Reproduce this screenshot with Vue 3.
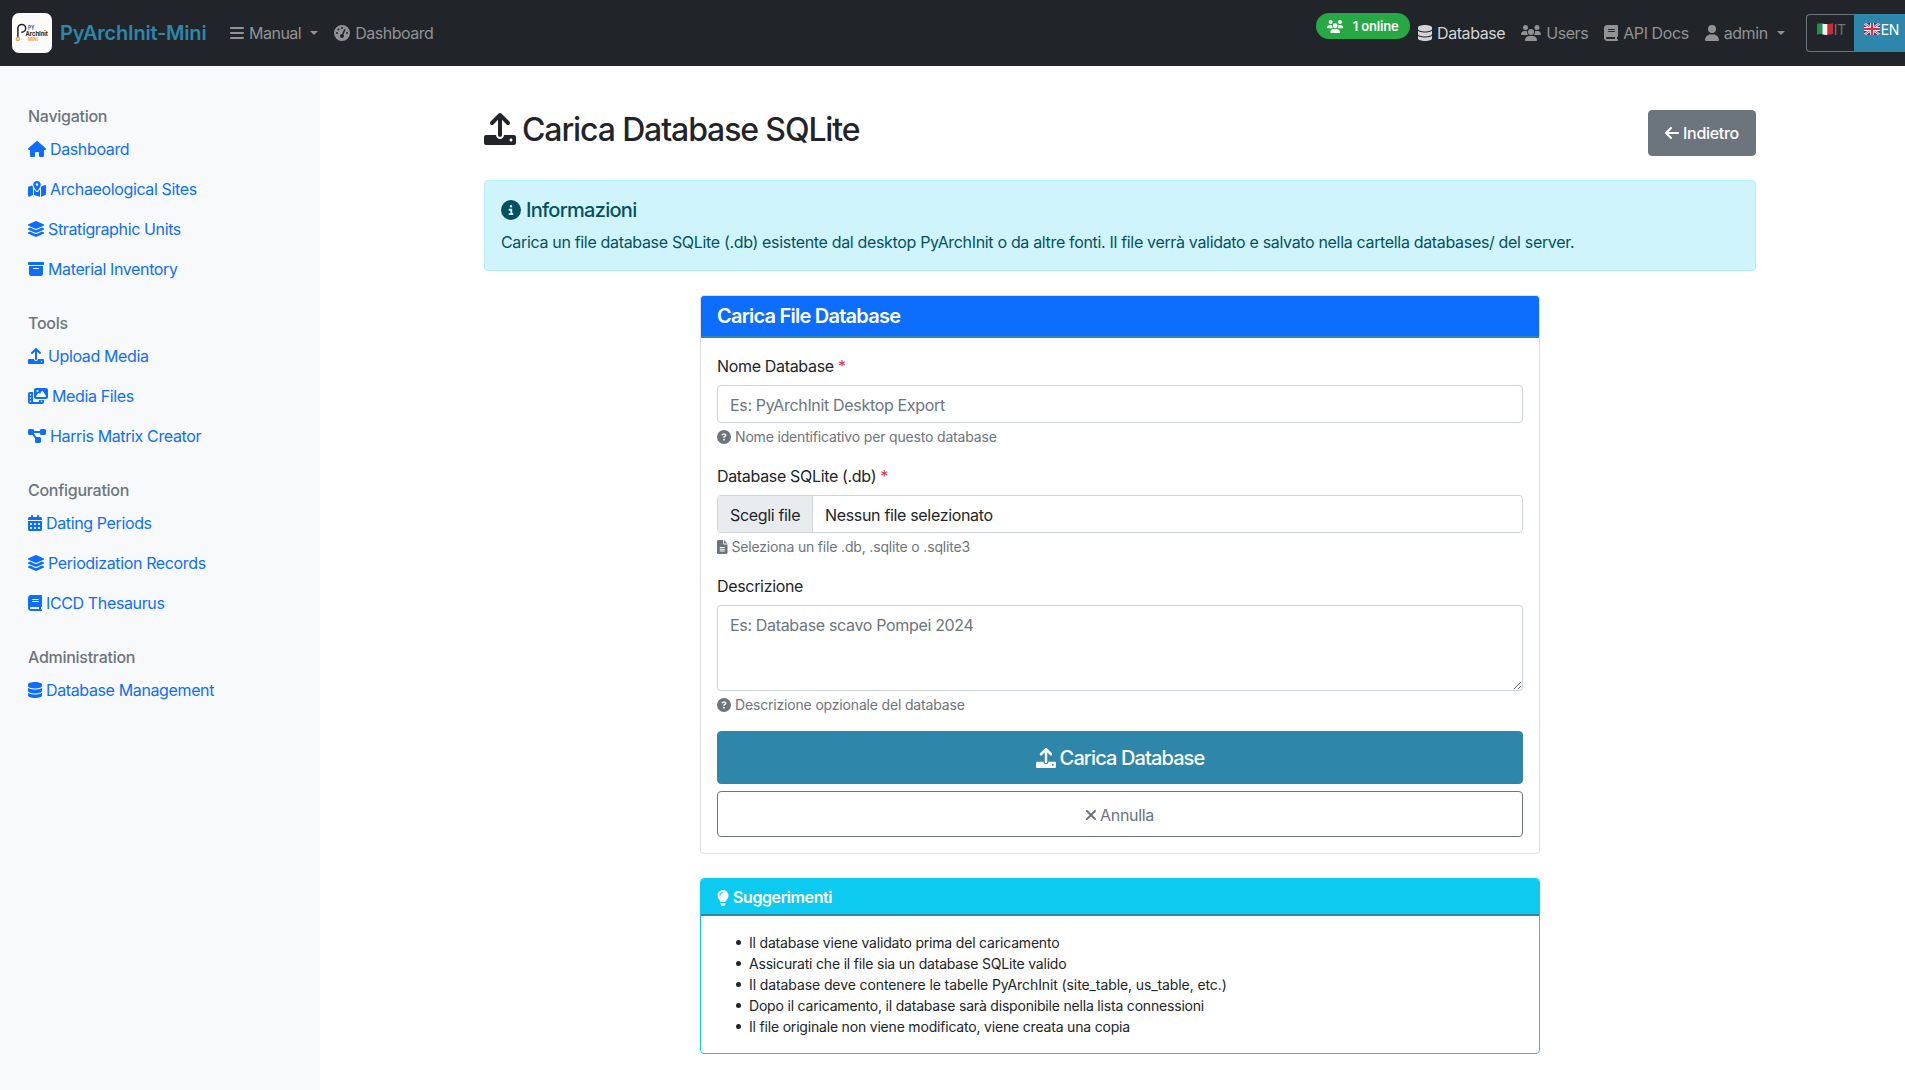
<script setup>
import { h } from 'vue'

const icons = {
  bars: [448, 'M0 96C0 78.3 14.3 64 32 64l384 0c17.7 0 32 14.3 32 32s-14.3 32-32 32L32 128C14.3 128 0 113.7 0 96zM0 256c0-17.7 14.3-32 32-32l384 0c17.7 0 32 14.3 32 32s-14.3 32-32 32L32 288c-17.7 0-32-14.3-32-32zM448 416c0 17.7-14.3 32-32 32L32 448c-17.7 0-32-14.3-32-32s14.3-32 32-32l384 0c17.7 0 32 14.3 32 32z'],
  gauge: [512, 'M0 256a256 256 0 1 1 512 0A256 256 0 1 1 0 256zM288 96a32 32 0 1 0 -64 0 32 32 0 1 0 64 0zM256 416c35.3 0 64-28.7 64-64c0-17.4-6.9-33.1-18.1-44.6L366 161.7c5.3-12.1-.2-26.3-12.3-31.6s-26.3 .2-31.6 12.3L257.9 288c-.6 0-1.3 0-1.9 0c-35.3 0-64 28.7-64 64s28.7 64 64 64zM176 144a32 32 0 1 0 -64 0 32 32 0 1 0 64 0zM96 288a32 32 0 1 0 0-64 32 32 0 1 0 0 64zm352-32a32 32 0 1 0 -64 0 32 32 0 1 0 64 0z'],
  users: [640, 'M144 0a80 80 0 1 1 0 160A80 80 0 1 1 144 0zM512 0a80 80 0 1 1 0 160A80 80 0 1 1 512 0zM0 298.7C0 239.8 47.8 192 106.7 192l42.7 0c15.9 0 31 3.5 44.6 9.7c-1.3 7.2-1.9 14.7-1.9 22.3c0 38.2 16.8 72.5 43.3 96c-.2 0-.4 0-.7 0L21.3 320C9.6 320 0 310.4 0 298.7zM405.3 320c-.2 0-.4 0-.7 0c26.6-23.5 43.3-57.8 43.3-96c0-7.6-.7-15-1.9-22.3c13.6-6.3 28.7-9.7 44.6-9.7l42.7 0C592.2 192 640 239.8 640 298.7c0 11.8-9.6 21.3-21.3 21.3l-213.3 0zM224 224a96 96 0 1 1 192 0 96 96 0 1 1 -192 0zM128 485.3C128 411.7 187.7 352 261.3 352l117.3 0C452.3 352 512 411.7 512 485.3c0 14.7-11.9 26.7-26.7 26.7l-330.7 0c-14.7 0-26.7-11.9-26.7-26.7z'],
  database: [448, 'M448 80l0 48c0 44.2-100.3 80-224 80S0 172.2 0 128L0 80C0 35.8 100.3 0 224 0S448 35.8 448 80zM393.2 214.7c20.8-7.4 39.9-16.9 54.8-28.6L448 288c0 44.2-100.3 80-224 80S0 332.2 0 288L0 186.1c14.9 11.8 34 21.2 54.8 28.6C99.7 230.7 159.5 240 224 240s124.3-9.3 169.2-25.3zM0 346.1c14.9 11.8 34 21.2 54.8 28.6C99.7 390.7 159.5 400 224 400s124.3-9.3 169.2-25.3c20.8-7.4 39.9-16.9 54.8-28.6l0 85.9c0 44.2-100.3 80-224 80S0 476.2 0 432l0-85.9z'],
  book: [448, 'M96 0C43 0 0 43 0 96L0 416c0 53 43 96 96 96l288 0 32 0c17.7 0 32-14.3 32-32s-14.3-32-32-32l0-64c17.7 0 32-14.3 32-32l0-320c0-17.7-14.3-32-32-32L384 0 96 0zm0 384l256 0 0 64L96 448c-17.7 0-32-14.3-32-32s14.3-32 32-32zm32-240c0-8.8 7.2-16 16-16l192 0c8.8 0 16 7.2 16 16s-7.2 16-16 16l-192 0c-8.8 0-16-7.2-16-16zm16 48l192 0c8.8 0 16 7.2 16 16s-7.2 16-16 16l-192 0c-8.8 0-16-7.2-16-16s7.2-16 16-16z'],
  user: [448, 'M224 256A128 128 0 1 0 224 0a128 128 0 1 0 0 256zm-45.7 48C79.8 304 0 383.8 0 482.3C0 498.7 13.3 512 29.7 512l388.6 0c16.4 0 29.7-13.3 29.7-29.7C448 383.8 368.2 304 269.7 304l-91.4 0z'],
  home: [576, 'M575.8 255.5c0 18-15 32.1-32 32.1l-32 0 .7 160.2c0 2.7-.2 5.4-.5 8.1l0 16.2c0 22.1-17.9 40-40 40l-16 0c-1.1 0-2.2 0-3.3-.1c-1.4 .1-2.8 .1-4.2 .1L416 512l-24 0c-22.1 0-40-17.9-40-40l0-24 0-64c0-17.7-14.3-32-32-32l-64 0c-17.7 0-32 14.3-32 32l0 64 0 24c0 22.1-17.9 40-40 40l-24 0-31.9 0c-1.5 0-3-.1-4.5-.2c-1.2 .1-2.4 .2-3.6 .2l-16 0c-22.1 0-40-17.9-40-40l0-112c0-.9 0-1.9 .1-2.8l0-69.7-32 0c-18 0-32-14-32-32.1c0-9 3-17 10-24L266.4 8c7-7 15-8 22-8s15 2 21 7L564.8 231.5c8 7 12 15 11 24z'],
  map: [576, 'M408 120c0 54.6-73.1 151.9-105.2 192c-7.7 9.6-22 9.6-29.6 0C241.1 271.9 168 174.6 168 120C168 53.7 221.7 0 288 0s120 53.7 120 120zm8 80.4c3.5-6.9 6.7-13.8 9.6-20.6c.5-1.2 1-2.5 1.5-3.7l116-46.4C558.9 123.4 576 135 576 152l0 270.8c0 9.8-6 18.6-15.1 22.3L416 503l0-302.6zM137.6 138.3c2.4 14.1 7.2 28.3 12.8 41.5c2.9 6.8 6.1 13.7 9.6 20.6l0 251.4L32.9 502.7C17.1 509 0 497.4 0 480.4L0 209.6c0-9.8 6-18.6 15.1-22.3l122.6-49zM327.8 332c13.9-17.4 35.7-45.7 56.2-77l0 249.3L192 449.4 192 255c20.5 31.3 42.3 59.6 56.2 77c20.5 25.6 59.1 25.6 79.6 0zM288 152a40 40 0 1 0 0-80 40 40 0 1 0 0 80z'],
  layers: [512, 'M232.5 5.171C247.4-1.718 264.6-1.718 279.5 5.171L498.1 106.2C506.6 110.1 512 118.6 512 127.1C512 137.3 506.6 145.8 498.1 149.8L279.5 250.8C264.6 257.7 247.4 257.7 232.5 250.8L13.93 149.8C5.438 145.8 0 137.3 0 127.1C0 118.6 5.437 110.1 13.93 106.2L232.5 5.171zM498.1 234.2C506.6 238.1 512 246.6 512 255.1C512 265.3 506.6 273.8 498.1 277.8L279.5 378.8C264.6 385.7 247.4 385.7 232.5 378.8L13.93 277.8C5.438 273.8 0 265.3 0 255.1C0 246.6 5.437 238.1 13.93 234.2L67.13 209.6L219.1 279.8C242.5 290.7 269.5 290.7 292.9 279.8L444.9 209.6L498.1 234.2zM292.9 407.8L444.9 337.6L498.1 362.2C506.6 366.1 512 374.6 512 383.1C512 393.3 506.6 401.8 498.1 405.8L279.5 506.8C264.6 513.7 247.4 513.7 232.5 506.8L13.93 405.8C5.438 401.8 0 393.3 0 383.1C0 374.6 5.437 366.1 13.93 362.2L67.13 337.6L219.1 407.8C242.5 418.7 269.5 418.7 292.9 407.8V407.8z'],
  archive: [512, 'M32 32l448 0c17.7 0 32 14.3 32 32l0 32c0 17.7-14.3 32-32 32L32 128C14.3 128 0 113.7 0 96L0 64C0 46.3 14.3 32 32 32zm0 128l448 0 0 256c0 35.3-28.7 64-64 64L96 480c-35.3 0-64-28.7-64-64l0-256zm128 80c0 8.8 7.2 16 16 16l160 0c8.8 0 16-7.2 16-16s-7.2-16-16-16l-160 0c-8.8 0-16 7.2-16 16z'],
  upload: [512, 'M105.4 182.6c12.5 12.49 32.76 12.5 45.25 .001L224 109.3V352c0 17.67 14.33 32 32 32c17.67 0 32-14.33 32-32V109.3l73.38 73.38c12.49 12.49 32.75 12.49 45.25-.001c12.49-12.49 12.49-32.75 0-45.25l-128-128C272.4 3.125 264.2 0 256 0S239.6 3.125 233.4 9.375L105.4 137.4C92.88 149.9 92.88 170.1 105.4 182.6zM480 352h-160c0 35.35-28.65 64-64 64s-64-28.65-64-64H32c-17.67 0-32 14.33-32 32v96c0 17.67 14.33 32 32 32h448c17.67 0 32-14.33 32-32v-96C512 366.3 497.7 352 480 352zM432 456c-13.2 0-24-10.8-24-24c0-13.2 10.8-24 24-24s24 10.8 24 24C456 445.2 445.2 456 432 456z'],
  photo: [640, 'M256 0L576 0c35.3 0 64 28.7 64 64l0 224c0 35.3-28.7 64-64 64l-320 0c-35.3 0-64-28.7-64-64l0-224c0-35.3 28.7-64 64-64zM476 106.7C471.5 100 464 96 456 96s-15.5 4-20 10.7l-56 84L362.7 169c-4.6-5.7-11.5-9-18.7-9s-14.2 3.3-18.7 9l-64 80c-5.8 7.2-6.9 17.1-2.9 25.4s12.4 13.6 21.6 13.6l80 0 48 0 144 0c8.9 0 17-4.9 21.2-12.7s3.7-17.3-1.2-24.6l-96-144zM336 96a32 32 0 1 0 -64 0 32 32 0 1 0 64 0zM64 128l96 0 0 256 0 32c0 17.7 14.3 32 32 32l128 0c17.7 0 32-14.3 32-32l0-32 160 0 0 64c0 35.3-28.7 64-64 64L64 512c-35.3 0-64-28.7-64-64L0 192c0-35.3 28.7-64 64-64zm8 64c-8.8 0-16 7.2-16 16l0 16c0 8.8 7.2 16 16 16l16 0c8.8 0 16-7.2 16-16l0-16c0-8.8-7.2-16-16-16l-16 0zm0 104c-8.8 0-16 7.2-16 16l0 16c0 8.8 7.2 16 16 16l16 0c8.8 0 16-7.2 16-16l0-16c0-8.8-7.2-16-16-16l-16 0zm0 104c-8.8 0-16 7.2-16 16l0 16c0 8.8 7.2 16 16 16l16 0c8.8 0 16-7.2 16-16l0-16c0-8.8-7.2-16-16-16l-16 0zm336 16l0 16c0 8.8 7.2 16 16 16l16 0c8.8 0 16-7.2 16-16l0-16c0-8.8-7.2-16-16-16l-16 0c-8.8 0-16 7.2-16 16z'],
  diagram: [576, 'M0 80C0 53.5 21.5 32 48 32l96 0c26.5 0 48 21.5 48 48l0 16 192 0 0-16c0-26.5 21.5-48 48-48l96 0c26.5 0 48 21.5 48 48l0 96c0 26.5-21.5 48-48 48l-96 0c-26.5 0-48-21.5-48-48l0-16-192 0 0 16c0 1.7-.1 3.4-.3 5L272 288l96 0c26.5 0 48 21.5 48 48l0 96c0 26.5-21.5 48-48 48l-96 0c-26.5 0-48-21.5-48-48l0-96c0-1.7 .1-3.4 .3-5L144 224l-96 0c-26.5 0-48-21.5-48-48L0 80z'],
  calendar: [448, 'M128 0c17.7 0 32 14.3 32 32l0 32 128 0 0-32c0-17.7 14.3-32 32-32s32 14.3 32 32l0 32 48 0c26.5 0 48 21.5 48 48l0 48L0 160l0-48C0 85.5 21.5 64 48 64l48 0 0-32c0-17.7 14.3-32 32-32zM0 192l448 0 0 272c0 26.5-21.5 48-48 48L48 512c-26.5 0-48-21.5-48-48L0 192zm64 80l0 32c0 8.8 7.2 16 16 16l32 0c8.8 0 16-7.2 16-16l0-32c0-8.8-7.2-16-16-16l-32 0c-8.8 0-16 7.2-16 16zm128 0l0 32c0 8.8 7.2 16 16 16l32 0c8.8 0 16-7.2 16-16l0-32c0-8.8-7.2-16-16-16l-32 0c-8.8 0-16 7.2-16 16zm144-16c-8.8 0-16 7.2-16 16l0 32c0 8.8 7.2 16 16 16l32 0c8.8 0 16-7.2 16-16l0-32c0-8.8-7.2-16-16-16l-32 0zM64 400l0 32c0 8.8 7.2 16 16 16l32 0c8.8 0 16-7.2 16-16l0-32c0-8.8-7.2-16-16-16l-32 0c-8.8 0-16 7.2-16 16zm144-16c-8.8 0-16 7.2-16 16l0 32c0 8.8 7.2 16 16 16l32 0c8.8 0 16-7.2 16-16l0-32c0-8.8-7.2-16-16-16l-32 0zm112 16l0 32c0 8.8 7.2 16 16 16l32 0c8.8 0 16-7.2 16-16l0-32c0-8.8-7.2-16-16-16l-32 0c-8.8 0-16 7.2-16 16z'],
  info: [512, 'M256 512A256 256 0 1 0 256 0a256 256 0 1 0 0 512zM216 336l24 0 0-64-24 0c-13.3 0-24-10.7-24-24s10.7-24 24-24l48 0c13.3 0 24 10.7 24 24l0 88 8 0c13.3 0 24 10.7 24 24s-10.7 24-24 24l-80 0c-13.3 0-24-10.7-24-24s10.7-24 24-24zm40-208a32 32 0 1 1 0 64 32 32 0 1 1 0-64z'],
  question: [512, 'M256 512A256 256 0 1 0 256 0a256 256 0 1 0 0 512zM169.8 165.3c7.9-22.3 29.1-37.3 52.8-37.3l58.3 0c34.9 0 63.1 28.3 63.1 63.1c0 22.6-12.1 43.5-31.7 54.8L280 264.4c-.2 13-10.9 23.6-24 23.6c-13.3 0-24-10.7-24-24l0-13.5c0-8.6 4.6-16.5 12.1-20.8l44.3-25.4c4.7-2.7 7.6-7.7 7.6-13.1c0-8.4-6.8-15.1-15.1-15.1l-58.3 0c-3.4 0-6.4 2.1-7.5 5.3l-.4 1.2c-4.4 12.5-18.2 19-30.6 14.6s-19-18.2-14.6-30.6l.4-1.2zM224 352a32 32 0 1 1 64 0 32 32 0 1 1 -64 0z'],
  file: [384, 'M48 0C21.5 0 0 21.5 0 48L0 464c0 26.5 21.5 48 48 48l288 0c26.5 0 48-21.5 48-48l0-304-128 0c-17.7 0-32-14.3-32-32L224 0 48 0zM256 0l0 128 128 0L256 0zM112 256l160 0c8.8 0 16 7.2 16 16s-7.2 16-16 16l-160 0c-8.8 0-16-7.2-16-16s7.2-16 16-16zm0 64l160 0c8.8 0 16 7.2 16 16s-7.2 16-16 16l-160 0c-8.8 0-16-7.2-16-16s7.2-16 16-16zm0 64l160 0c8.8 0 16 7.2 16 16s-7.2 16-16 16l-160 0c-8.8 0-16-7.2-16-16s7.2-16 16-16z'],
  arrow: [448, 'M9.4 233.4c-12.5 12.5-12.5 32.8 0 45.3l160 160c12.5 12.5 32.8 12.5 45.3 0s12.5-32.8 0-45.3L109.2 288 416 288c17.7 0 32-14.3 32-32s-14.3-32-32-32l-306.7 0L214.6 118.6c12.5-12.5 12.5-32.8 0-45.3s-32.8-12.5-45.3 0l-160 160z'],
  close: [320, 'M310.6 361.4c12.5 12.5 12.5 32.75 0 45.25C304.4 412.9 296.2 416 288 416s-16.38-3.125-22.62-9.375L160 301.3L54.63 406.6C48.38 412.9 40.19 416 32 416S15.63 412.9 9.375 406.6c-12.5-12.5-12.5-32.75 0-45.25l105.4-105.4L9.375 150.6c-12.5-12.5-12.5-32.75 0-45.25s32.75-12.5 45.25 0L160 210.8l105.4-105.4c12.5-12.5 32.75-12.5 45.25 0s12.5 32.75 0 45.25l-105.4 105.4L310.6 361.4z'],
  bulb: [384, 'M272 384c9.6-31.9 29.5-59.1 49.2-86.2c5.2-7.1 10.4-14.2 15.4-21.4c19.8-28.5 31.4-63 31.4-100.3C368 78.8 289.2 0 192 0S16 78.8 16 176c0 37.3 11.6 71.9 31.4 100.3c5 7.2 10.2 14.3 15.4 21.4c19.8 27.1 39.7 54.4 49.2 86.2l160 0zM192 512c44.2 0 80-35.8 80-80l0-16-160 0 0 16c0 44.2 35.8 80 80 80zM112 176c0 8.8-7.2 16-16 16s-16-7.2-16-16c0-61.9 50.1-112 112-112c8.8 0 16 7.2 16 16s-7.2 16-16 16c-44.2 0-80 35.8-80 80z'],
}

const Icon = (props) => {
  const [w, d] = icons[props.name]
  return h('svg', { viewBox: `0 0 ${w} 512`, style: { width: `${w / 512}em` }, 'aria-hidden': 'true' }, [h('path', { d })])
}
Icon.props = ['name']

const sections = [
  { title: 'Navigation', links: [['home', 'Dashboard'], ['map', 'Archaeological Sites'], ['layers', 'Stratigraphic Units'], ['archive', 'Material Inventory']] },
  { title: 'Tools', links: [['upload', 'Upload Media'], ['photo', 'Media Files'], ['diagram', 'Harris Matrix Creator']] },
  { title: 'Configuration', links: [['calendar', 'Dating Periods'], ['layers', 'Periodization Records'], ['book', 'ICCD Thesaurus']] },
  { title: 'Administration', links: [['database', 'Database Management']] },
]

const tips = [
  'Il database viene validato prima del caricamento',
  'Assicurati che il file sia un database SQLite valido',
  'Il database deve contenere le tabelle PyArchInit (site_table, us_table, etc.)',
  'Dopo il caricamento, il database sarà disponibile nella lista connessioni',
  'Il file originale non viene modificato, viene creata una copia',
]
</script>

<template>
  <div class="page">
    <header class="navbar">
      <a class="brand">
        <svg class="logo" viewBox="0 0 40 40">
          <rect width="40" height="40" rx="7" fill="#fbfbfb" />
          <path d="M5.900 24V15.300a3.900 3.900 0 1 1 3.900 3.900" fill="none" stroke="#222" stroke-width="1.5" stroke-linecap="round" />
          <circle cx="5.900" cy="25.900" r="1.6" fill="none" stroke="#f59a3c" stroke-width="1.2" />
          <text x="16" y="17" class="logo-py" textLength="6.500" lengthAdjust="spacingAndGlyphs">PY</text>
          <text x="13.500" y="22.700" class="logo-arch" textLength="22.500" lengthAdjust="spacingAndGlyphs">ArchInit</text>
          <text x="16" y="27.800" class="logo-mini" textLength="10" lengthAdjust="spacingAndGlyphs">MINI</text>
        </svg>
        <span class="brand-name">PyArchInit-Mini</span>
      </a>
      <nav class="menu">
        <a><Icon class="icon" name="bars" /><span>Manual</span><i class="caret"></i></a>
        <a><Icon class="icon" name="gauge" /><span>Dashboard</span></a>
      </nav>
      <nav class="menu menu-end">
        <span class="online"><Icon class="icon" name="users" /><span>1 online</span></span>
        <a class="active"><Icon class="icon" name="database" /><span>Database</span></a>
        <a><Icon class="icon" name="users" /><span>Users</span></a>
        <a><Icon class="icon" name="book" /><span>API Docs</span></a>
        <a><Icon class="icon" name="user" /><span>admin</span><i class="caret"></i></a>
        <div class="langs">
          <a class="lang">
            <svg class="flag" viewBox="0 0 16 12">
              <path d="M0 .8Q2.6-.3 5.4.5V11.3Q2.6 10.5 0 11.6z" fill="#1c9150" />
              <path d="M5.4.5Q8 1.4 10.6.9V11.8Q8 12.2 5.4 11.3z" fill="#f3f3f3" />
              <path d="M10.6.9Q13.400 1.300 16 .2V11Q13.4 12 10.6 11.800z" fill="#c82b39" />
            </svg>IT</a>
          <a class="lang lang-on">
            <svg class="flag" viewBox="0 0 16 12">
              <rect width="16" height="12" rx=".6" fill="#23408f" />
              <path d="M0 0l16 12M16 0L0 12" stroke="#f1eef2" stroke-width="2.6" />
              <path d="M0 0l16 12M16 0L0 12" stroke="#d22f45" stroke-width="1" />
              <path d="M8 0v12M0 6h16" stroke="#f1eef2" stroke-width="4" />
              <path d="M8 0v12M0 6h16" stroke="#d22f45" stroke-width="2.2" />
            </svg>EN</a>
        </div>
      </nav>
    </header>

    <div class="body">
      <aside class="sidebar">
        <section v-for="s in sections" :key="s.title">
          <h6>{{ s.title }}</h6>
          <a v-for="[icon, label] in s.links" :key="label"><Icon class="icon" :name="icon" /><span>{{ label }}</span></a>
        </section>
      </aside>

      <main>
        <div class="title-row">
          <h2><Icon class="icon" name="upload" /><span>Carica Database SQLite</span></h2>
          <button class="btn back"><Icon class="icon" name="arrow" /><span>Indietro</span></button>
        </div>

        <div class="alert">
          <h5><Icon class="icon" name="info" /><span>Informazioni</span></h5>
          <p>Carica un file database SQLite (.db) esistente dal desktop PyArchInit o da altre fonti. Il file verrà validato e salvato nella cartella databases/ del server.</p>
        </div>

        <section class="card">
          <h5 class="card-head">Carica File Database</h5>
          <form class="card-body" @submit.prevent>
            <div class="field">
              <label>Nome Database <b>*</b></label>
              <input class="control" type="text" placeholder="Es: PyArchInit Desktop Export">
              <small><Icon class="icon" name="question" /><span>Nome identificativo per questo database</span></small>
            </div>
            <div class="field">
              <label>Database SQLite (.db) <b>*</b></label>
              <div class="control picker"><span class="choose">Scegli file</span><span class="chosen">Nessun file selezionato</span></div>
              <small><Icon class="icon" name="file" /><span>Seleziona un file .db, .sqlite o .sqlite3</span></small>
            </div>
            <div class="field">
              <label>Descrizione</label>
              <textarea class="control" rows="3" placeholder="Es: Database scavo Pompei 2024"></textarea>
              <small><Icon class="icon" name="question" /><span>Descrizione opzionale del database</span></small>
            </div>
            <div class="actions">
              <button class="btn submit"><Icon class="icon" name="upload" /><span>Carica Database</span></button>
              <button class="btn cancel"><Icon class="icon" name="close" /><span>Annulla</span></button>
            </div>
          </form>
        </section>

        <section class="card tips">
          <h6 class="card-head"><Icon class="icon" name="bulb" /><span>Suggerimenti</span></h6>
          <ul>
            <li v-for="t in tips" :key="t">{{ t }}</li>
          </ul>
        </section>
      </main>
    </div>
  </div>
</template>

<style>
html, body { overflow: hidden; }
</style>

<style scoped>
.page, .page * { box-sizing: border-box; }
.page {
  width: 1905px;
  height: 1090px;
  overflow: hidden;
  display: flex;
  flex-direction: column;
  background: #fff;
  color: #212529;
  font: 400 16px/24px Inter, "Liberation Sans", sans-serif;
  letter-spacing: -0.33px;
}
h2, h5, h6, p, ul { margin: 0; }
button, input, textarea { font: inherit; letter-spacing: inherit; }
.icon { height: 1em; flex: none; fill: currentColor; }

.navbar {
  flex: none;
  height: 66px;
  padding-left: 12px;
  display: flex;
  align-items: center;
  background: #212529;
}
.brand { display: flex; align-items: center; gap: 8px; width: 210px; }
.logo { width: 40px; height: 40px; }
.logo-py { font: 700 5.500px Inter, sans-serif; fill: #2b6cb0; letter-spacing: 0; }
.logo-arch { font: 700 6px Inter, sans-serif; fill: #222; letter-spacing: 0; }
.logo-mini { font: 700 4.500px Inter, sans-serif; fill: #f59a3c; letter-spacing: 0; }
.brand-name { font-size: 20px; font-weight: 600; color: #2e86ab; white-space: nowrap; letter-spacing: -0.2px; }
.menu { display: flex; align-items: center; color: #909294; letter-spacing: -0.5px; }
.menu a { display: flex; flex: none; align-items: center; gap: 5px; padding: 0 0 0 8px; margin-right: 8px; white-space: nowrap; }
.menu .active { color: #d3d4d5; }
.caret { margin-left: 4px; border: 4.800px solid transparent; border-top-color: currentColor; border-bottom: 0; }
.menu-end { margin-left: auto; align-self: stretch; width: 589px; flex: none; letter-spacing: -0.42px; }
.online {
  flex: none;
  width: 94px;
  height: 26px;
  margin-top: -14px;
  display: flex;
  align-items: center;
  justify-content: center;
  gap: 9px;
  border-radius: 13px;
  background: #28a745;
  color: #fff;
  font-size: 13px;
  font-weight: 600;
  letter-spacing: -0.15px;
}
.langs { display: flex; flex: none; margin-left: 13px; height: 38px; }
.menu .lang {
  width: 48px;
  margin: 0;
  padding: 0 0 6px 10px;
  gap: 1px;
  border: 1px solid #6c757d;
  border-right: 0;
  border-radius: 4px 0 0 4px;
  color: #6c757d;
  font-size: 14px;
}
.menu .lang-on { width: 60px; padding-left: 9px; border-color: #2e86ab; border-radius: 0; background: #2e86ab; color: #fff; }
.flag { width: 16px; height: 12px; flex: none; margin-top: -3px; }

.body { flex: 1; display: flex; min-height: 0; }
.sidebar { flex: none; width: 320px; padding: 40px 28px 0; background: #f8f9fa; letter-spacing: -0.37px; }
.sidebar section { margin-bottom: 24px; }
.sidebar h6 { padding-top: 1px; margin-bottom: 3px; font-size: 16px; font-weight: 500; line-height: 19px; color: #6c757d; letter-spacing: -0.28px; }
.sidebar a { display: flex; align-items: center; gap: 4px; height: 40px; color: #0d6efd; }

main { flex: none; width: 1272px; margin-left: 164px; padding-top: 44px; }
.title-row { display: flex; align-items: center; justify-content: space-between; height: 46px; margin-bottom: 24px; }
h2 { display: flex; align-items: center; gap: 6px; margin-bottom: 8px; font-size: 32px; font-weight: 500; line-height: 38.400px; letter-spacing: -1.12px; }
h2 span { padding-top: 2px; }
.btn { display: flex; align-items: center; justify-content: center; gap: 4px; border: 1px solid; border-radius: 4px; }
.back { width: 108px; height: 46px; background: #6c757d; border-color: #6c757d; color: #fff; font-weight: 500; letter-spacing: -0.3px; }
.alert { height: 91px; padding: 17px 16px 15px; border: 1px solid #b6effb; border-radius: 4px; background: #cff4fc; color: #055160; white-space: nowrap; }
h5 { font-size: 20px; font-weight: 500; line-height: 24px; letter-spacing: -0.72px; }
.alert h5 { display: flex; align-items: center; gap: 5px; margin-bottom: 8px; }

.card { width: 840px; margin: 24px auto 0; border: 1px solid #dfdfdf; border-radius: 4px; }
.card-head {
  padding: 8px 16px;
  border-bottom: 2px solid #2e86ab;
  border-radius: 3px 3px 0 0;
  background: #0d6efd;
  color: #fff;
  font-weight: 600;
}
h5.card-head { letter-spacing: -0.77px; }
.card-body { padding: 15px 16px 16px; }
.field { margin-bottom: 16px; }
label { display: block; padding-top: 1px; margin-bottom: 7px; }
label b { color: #dc3545; font-weight: 400; }
.control {
  display: block;
  width: 100%;
  height: 38px;
  padding: 7px 12px 5px;
  border: 1px solid #ced4da;
  border-radius: 4px;
  background: #fff;
  color: #212529;
  outline: 0;
}
.control::placeholder { color: #6c757d; opacity: 1; }
textarea.control { height: 86px; resize: vertical; }
.picker { display: flex; padding: 0; overflow: hidden; line-height: 38px; }
.choose { width: 95px; padding-left: 12px; border-right: 1px solid #ced4da; background: #e9ecef; }
.chosen { padding-left: 12px; }
small { display: flex; align-items: center; gap: 4px; margin-top: 3px; font-size: 14px; line-height: 21px; color: #6c757d; letter-spacing: -0.17px; }
.actions { display: flex; flex-direction: column; gap: 7px; }
.submit { height: 53px; border-color: #2e86ab; background: #2e86ab; color: #fff; font-size: 20px; font-weight: 500; letter-spacing: -0.88px; }
.cancel { height: 46px; padding-top: 2px; border-color: #6c757d; background: #fff; color: #6c757d; }

.tips { margin-top: 24px; border-color: #0dcaf0; }
.tips .card-head { display: flex; align-items: center; gap: 4px; padding: 9px 16px 7px; font-size: 16px; line-height: 19px; background: #0dcaf0; letter-spacing: -0.4px; }
.tips ul { padding: 16px 16px 16px 35px; list-style: none; font-size: 14px; line-height: 21px; letter-spacing: -0.19px; }
.tips li { display: flex; align-items: center; gap: 8px; }
.tips li::before { content: ""; width: 5px; height: 5px; border-radius: 50%; background: #212529; }
.tips li:nth-child(3) { letter-spacing: -0.1px; }
</style>
